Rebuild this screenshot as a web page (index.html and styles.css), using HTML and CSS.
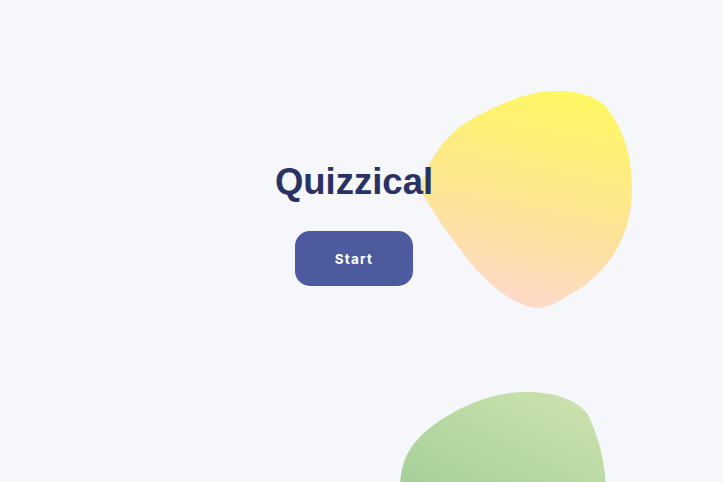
FILE: index.html
```html
<!DOCTYPE html>
<html lang="en">
<head>
<meta charset="utf-8">
<title>Quizzical</title>
<link rel="stylesheet" href="styles.css">
</head>
<body>
<svg class="blobs" width="723" height="482" viewBox="0 0 723 482" aria-hidden="true">
  <defs>
    <linearGradient id="gy" x1="0.65" y1="0" x2="0.45" y2="1">
      <stop offset="0" stop-color="#FFF763"/>
      <stop offset="0.55" stop-color="#FDE495"/>
      <stop offset="1" stop-color="#FED8CB"/>
    </linearGradient>
    <linearGradient id="gg" x1="1" y1="0" x2="0" y2="1">
      <stop offset="0" stop-color="#CEE4AF"/>
      <stop offset="1" stop-color="#A6CE98"/>
    </linearGradient>
  </defs>
  <path fill="url(#gy)" d="M555,91 C580,91 598,97 607,108 C620,125 632,150 632,188 C632,230 615,262 585,285 C565,298 550,308 538,308 C520,308 490,288 470,262 C450,236 430,210 420,188 C428,160 445,135 470,120 C500,103 530,91 555,91 Z"/>
  <path fill="url(#gg)" d="M525,392 C555,392 578,400 588,415 C598,435 605,460 606,490 L400,490 C400,468 405,450 425,432 C450,410 490,392 525,392 Z"/>
</svg>
<main class="intro">
  <h1 class="title">Quizzical</h1>
  <button class="start-btn" type="button">Start</button>
</main>
</body>
</html>
```
FILE: styles.css
```css
html, body {
  margin: 0;
  height: 100%;
}
body {
  background: #F5F7FB;
  overflow: hidden;
  position: relative;
  font-family: "Liberation Sans", Arial, sans-serif;
}
.blobs {
  position: absolute;
  left: 0;
  top: 0;
  z-index: 0;
}
.intro {
  position: relative;
  z-index: 1;
  display: flex;
  flex-direction: column;
  align-items: center;
  padding-top: 161px;
  padding-right: 15px;
}
.title {
  margin: 0;
  font-size: 36.5px;
  line-height: 42px;
  font-weight: 700;
  color: #293264;
}
.start-btn {
  margin-top: 28px;
  width: 118px;
  height: 55px;
  border: none;
  border-radius: 15px;
  background: #4D5B9E;
  color: #FFFFFF;
  font-family: Inter, "DejaVu Sans", sans-serif;
  font-weight: 700;
  font-size: 13.5px;
  letter-spacing: 1.2px;
  cursor: pointer;
}
```
